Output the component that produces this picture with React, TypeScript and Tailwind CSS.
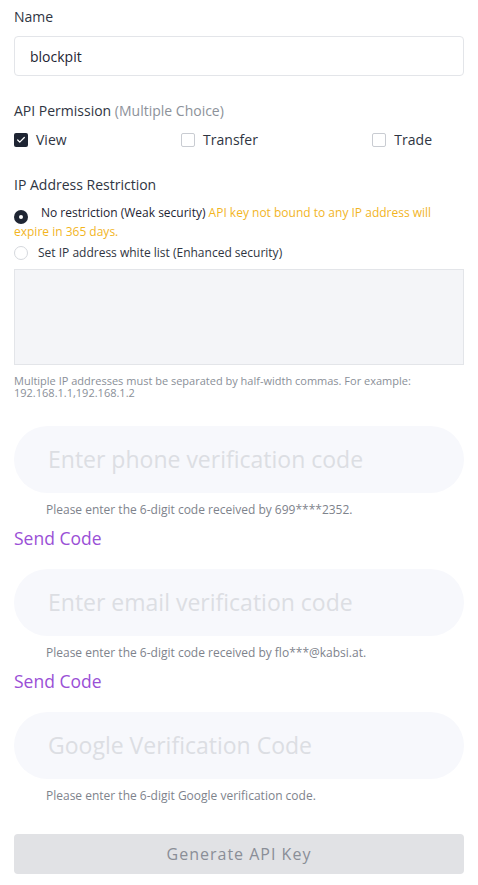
import { Check } from 'lucide-react';

const font = { fontFamily: '"Open Sans", Lato, sans-serif' };

function CheckItem({ label, checked }: { label: string; checked?: boolean }) {
  return (
    <label className="flex items-center gap-2">
      {checked ? (
        <span className="flex h-[14px] w-[14px] items-center justify-center rounded-[2px] bg-[#1e2533]">
          <Check className="h-[10px] w-[10px] text-white" strokeWidth={3} />
        </span>
      ) : (
        <span className="h-[14px] w-[14px] rounded-[2px] border border-[#c9ccd2] bg-white" />
      )}
      <span className="text-[14px] text-[#2f3542]">{label}</span>
    </label>
  );
}

function CodeField({ placeholder, hint, send }: { placeholder: string; hint: string; send?: boolean }) {
  return (
    <div className="flex flex-col">
      <div className="flex h-[67px] items-center rounded-full bg-[#f7f8fc] pl-[34px]">
        <span className="text-[23px] text-[#dcdee3]">{placeholder}</span>
      </div>
      <p className="mt-[9px] pl-[32px] text-[12px] leading-[16px] text-[#7e838c]">{hint}</p>
      {send && (
        <button className="mt-[9px] self-start text-[17.5px] leading-[22px] text-[#9a4fd6]">Send Code</button>
      )}
    </div>
  );
}

export default function App() {
  return (
    <div className="flex w-[478px] flex-col bg-white px-[14px] pt-[7px]" style={font}>
      <div className="text-[14px] leading-[20px] text-[#2f3542]">Name</div>
      <div className="mt-[9px] flex h-[40px] items-center rounded-[4px] border border-[#e3e5e9] px-[15px]">
        <span className="text-[14px] text-[#1e2533]">blockpit</span>
      </div>

      <div className="mt-[25px] text-[14px] leading-[20px] text-[#2f3542]">
        API Permission <span className="text-[#8d929a]">(Multiple Choice)</span>
      </div>
      <div className="mt-[8px] flex items-center justify-between pr-[32px]">
        <CheckItem label="View" checked />
        <CheckItem label="Transfer" />
        <CheckItem label="Trade" />
      </div>

      <div className="mt-[25px] text-[14px] leading-[20px] text-[#2f3542]">IP Address Restriction</div>
      <p className="mt-[8px] text-[12px] leading-[19px] text-[#1e2533]">
        <span className="mr-[13px] inline-flex h-[14px] w-[14px] translate-y-[2px] items-center justify-center rounded-full bg-[#1e2533]">
          <span className="h-[4px] w-[4px] rounded-full bg-white" />
        </span>
        No restriction (Weak security){' '}
        <span className="text-[#f2b51f]">API key not bound to any IP address will expire in 365 days.</span>
      </p>
      <div className="mt-[2px] flex items-center text-[12px] leading-[19px] text-[#2f3542]">
        <span className="mr-[10px] h-[14px] w-[14px] rounded-full border border-[#d5d8dd] bg-white" />
        Set IP address white list (Enhanced security)
      </div>
      <div className="mt-[7px] h-[96px] border border-[#e3e5e9] bg-[#f4f5f8]" />
      <p className="mt-[10px] text-[11px] leading-[12px] text-[#8a8f98]">
        Multiple IP addresses must be separated by half-width commas. For example: 192.168.1.1,192.168.1.2
      </p>

      <div className="mt-[27px] flex flex-col gap-[20px]">
        <CodeField placeholder="Enter phone verification code" hint="Please enter the 6-digit code received by 699****2352." send />
        <CodeField placeholder="Enter email verification code" hint="Please enter the 6-digit code received by flo***@kabsi.at." send />
        <CodeField placeholder="Google Verification Code" hint="Please enter the 6-digit Google verification code." />
      </div>

      <button className="mt-[30px] mb-[12px] h-[40px] rounded-[4px] bg-[#e1e2e5] text-[16px] tracking-[1px] text-[#8a8e97]">
        Generate API Key
      </button>
    </div>
  );
}
